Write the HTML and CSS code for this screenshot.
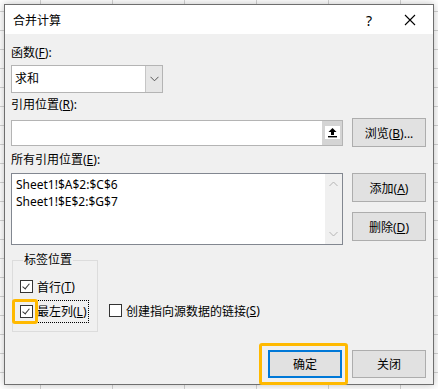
FILE: index.html
```html
<!DOCTYPE html>
<html lang="zh-CN">
<head>
    <meta charset="UTF-8">
    <meta name="viewport" content="width=device-width, initial-scale=1.0">
    <title>合并计算</title>
    <link rel="stylesheet" href="styles.css">
</head>
<body>
    <div class="dialog">
        <div class="titlebar">
            <span class="title">合并计算</span>
            <span class="help">?</span>
            <span class="close">
                <svg width="12" height="12" viewBox="0 0 12 12"><path d="M1 1 L11 11 M11 1 L1 11" stroke="#000" stroke-width="1.1"/></svg>
            </span>
        </div>

        <div class="content">
            <div class="label">函数(<u>F</u>):</div>
            <div class="select">
                <span class="select-value">求和</span>
                <span class="select-drop">
                    <svg width="9" height="6" viewBox="0 0 9 6"><path d="M0.5 0.8 L4.5 4.8 L8.5 0.8" fill="none" stroke="#555" stroke-width="1"/></svg>
                </span>
            </div>

            <div class="label">引用位置(<u>R</u>):</div>
            <div class="row">
                <div class="input">
                    <span class="picker">
                        <svg width="15" height="13" viewBox="0 0 15 13">
                            <rect width="15" height="13" fill="#fff"/>
                            <path d="M7.5 2 L3.5 6 H6 V9 H9 V6 H11.5 Z" fill="#000"/>
                            <rect x="3" y="10" width="9" height="1.4" fill="#000"/>
                        </svg>
                    </span>
                </div>
                <button class="btn">浏览(<u>B</u>)...</button>
            </div>

            <div class="label">所有引用位置(<u>E</u>):</div>
            <div class="row row-top">
                <div class="list">
                    <div class="list-items">
                        <div>Sheet1!$A$2:$C$6</div>
                        <div>Sheet1!$E$2:$G$7</div>
                    </div>
                    <div class="scrollbar">
                        <svg width="9" height="6" viewBox="0 0 9 6"><path d="M0.5 5 L4.5 1 L8.5 5" fill="none" stroke="#b4b4b4" stroke-width="1"/></svg>
                        <svg width="9" height="6" viewBox="0 0 9 6"><path d="M0.5 1 L4.5 5 L8.5 1" fill="none" stroke="#b4b4b4" stroke-width="1"/></svg>
                    </div>
                </div>
                <div class="side-buttons">
                    <button class="btn">添加(<u>A</u>)</button>
                    <button class="btn">删除(<u>D</u>)</button>
                </div>
            </div>

            <div class="options">
                <fieldset class="group">
                    <legend>标签位置</legend>
                    <label class="check">
                        <span class="box checked"></span>首行(<u>T</u>)
                    </label>
                    <label class="check">
                        <span class="box checked"><span class="mark"></span></span><span class="focus">最左列(<u>L</u>)</span>
                    </label>
                </fieldset>
                <label class="check link-check">
                    <span class="box"></span>创建指向源数据的链接(<u>S</u>)
                </label>
            </div>

            <div class="footer">
                <span class="ok-wrap">
                    <button class="btn btn-default">确定</button>
                    <span class="mark mark-ok"></span>
                </span>
                <button class="btn">关闭</button>
            </div>
        </div>
    </div>
</body>
</html>
```

FILE: styles.css
```css
body {
    margin: 0;
    padding: 4px;
    height: 389px;
    box-sizing: border-box;
    font-family: "Noto Sans", "Noto Sans CJK SC", sans-serif;
    font-size: 12px;
    color: #000;
    background-color: #fff;
    background-image:
        repeating-linear-gradient(90deg, transparent 0, transparent 40px, #d4d4d4 40px, #d4d4d4 41px, transparent 41px, transparent 72px),
        repeating-linear-gradient(180deg, transparent 0, transparent 11px, #d4d4d4 11px, #d4d4d4 12px, transparent 12px, transparent 19px);
    overflow: hidden;
}

.dialog {
    width: 430px;
    height: 381px;
    box-sizing: border-box;
    border: 1px solid #6f6f6f;
    background: #f0f0f0;
    box-shadow: 0 0 8px rgba(0, 0, 0, 0.25);
    display: flex;
    flex-direction: column;
}

/* Заголовок окна */
.titlebar {
    height: 29px;
    background: #fff;
    display: flex;
    align-items: center;
    padding-left: 8px;
}

.title {
    flex: 1;
    font-size: 12px;
    padding-top: 1px;
}

.help {
    width: 20px;
    text-align: center;
    font-size: 14px;
    margin-right: 25px;
    padding-top: 1px;
}

.close {
    width: 12px;
    display: flex;
    margin-right: 17px;
    margin-top: 1px;
}

.content {
    flex: 1;
    padding: 11px 7px 0 6px;
    display: flex;
    flex-direction: column;
}

.label {
    height: 16px;
    line-height: 16px;
    margin-bottom: 4px;
}

u {
    text-decoration-thickness: 1px;
    text-underline-offset: 1px;
}

.select {
    width: 152px;
    height: 28px;
    box-sizing: border-box;
    border: 1px solid #b4b4b4;
    background: #fff;
    display: flex;
    margin-bottom: 4px;
}

.select-value {
    flex: 1;
    line-height: 26px;
    padding-left: 3px;
}

.select-drop {
    width: 16px;
    background: #e6e6e6;
    border-left: 1px solid #c6c6c6;
    display: flex;
    align-items: center;
    justify-content: center;
}

.row {
    display: flex;
    align-items: center;
    gap: 9px;
    margin-bottom: 5px;
    margin-top: 1px;
}

.row-top {
    align-items: flex-start;
    margin-top: 1px;
}

.input {
    width: 332px;
    height: 26px;
    box-sizing: border-box;
    border: 1px solid #b4b4b4;
    background: #fff;
    display: flex;
    justify-content: flex-end;
}

.picker {
    width: 20px;
    background: #d4d4d4;
    display: flex;
    align-items: center;
    justify-content: center;
}

.btn {
    width: 74px;
    height: 29px;
    box-sizing: border-box;
    border: 1px solid #adadad;
    background: #e1e1e1;
    font-family: inherit;
    font-size: 12px;
    color: #000;
    padding: 0;
}

.list {
    width: 332px;
    height: 72px;
    box-sizing: border-box;
    border: 1px solid #828790;
    background: #fff;
    display: flex;
}

.list-items {
    flex: 1;
    padding: 2px 4px;
    line-height: 17px;
}

.scrollbar {
    width: 17px;
    background: #f0f0f0;
    display: flex;
    flex-direction: column;
    justify-content: space-between;
    align-items: center;
    padding: 7px 0 7px;
}

.side-buttons {
    display: flex;
    flex-direction: column;
    gap: 10px;
}

/* Группа флажков */
.options {
    display: flex;
    align-items: flex-end;
    margin-top: 3px;
}

.group {
    width: 86px;
    box-sizing: border-box;
    margin: 0 0 0 1px;
    padding: 7px 0 3px 7px;
    border: 1px solid #dcdcdc;
    height: 79px;
}

.group legend {
    padding: 0 1px;
    margin-left: 3px;
    line-height: 14px;
}

.check {
    display: flex;
    align-items: center;
    height: 25px;
    white-space: nowrap;
}

.box {
    width: 13px;
    height: 13px;
    box-sizing: border-box;
    border: 1px solid #333;
    background: #fff;
    margin-right: 4px;
    position: relative;
    flex-shrink: 0;
}

.box.checked::after {
    content: "";
    position: absolute;
    left: 3px;
    top: 1px;
    width: 3px;
    height: 6px;
    border: solid #333;
    border-width: 0 1.3px 1.3px 0;
    transform: rotate(40deg);
}

.focus {
    outline: 1px dotted #000;
    outline-offset: 0;
    padding: 1px 1px 2px 1px;
    margin-left: -1px;
}

.link-check {
    margin-left: 11px;
    margin-bottom: 9px;
}

/* Оранжевые рамки выделения */
.mark {
    position: absolute;
    border: 3px solid #ffb900;
    border-radius: 3px;
    pointer-events: none;
}

.box .mark {
    left: -9px;
    top: -7px;
    width: 20px;
    height: 19px;
}

.footer {
    display: flex;
    justify-content: flex-end;
    gap: 10px;
    margin-top: 18px;
}

.ok-wrap {
    position: relative;
    display: flex;
}

.btn-default {
    border: 2px solid #0078d7;
    height: 28px;
}

.mark-ok {
    left: -9px;
    top: -7px;
    width: 83px;
    height: 36px;
}

.footer .btn {
    height: 28px;
}
```
